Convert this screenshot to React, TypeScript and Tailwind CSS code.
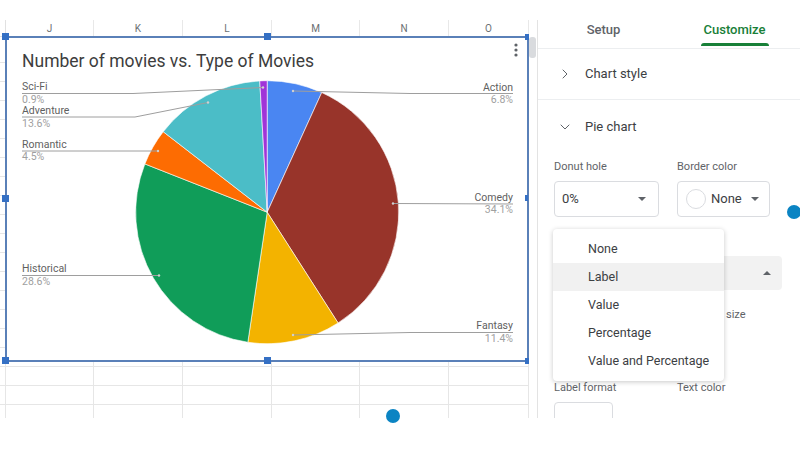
import { ChevronDown, ChevronRight } from 'lucide-react';

const cols = [
  { label: 'J', w: 'w-[88px]' },
  { label: 'K', w: 'w-[89px]' },
  { label: 'L', w: 'w-[89px]' },
  { label: 'M', w: 'w-[88px]' },
  { label: 'N', w: 'w-[89px]' },
  { label: 'O', w: 'w-[80px]' },
];

const slices = [
  { name: 'Action', pct: 6.8, color: '#4a86f2' },
  { name: 'Comedy', pct: 34.1, color: '#98342a' },
  { name: 'Fantasy', pct: 11.4, color: '#f3b300' },
  { name: 'Historical', pct: 28.6, color: '#109d59' },
  { name: 'Romantic', pct: 4.5, color: '#fd6c02' },
  { name: 'Adventure', pct: 13.6, color: '#4bbdc7' },
  { name: 'Sci-Fi', pct: 0.9, color: '#a034d8' },
];

const CX = 267.2;
const CY = 212.2;
const R = 131.5;

function slicePath(from: number, to: number) {
  const a0 = (from / 100) * Math.PI * 2;
  const a1 = (to / 100) * Math.PI * 2;
  const x0 = CX + R * Math.sin(a0);
  const y0 = CY - R * Math.cos(a0);
  const x1 = CX + R * Math.sin(a1);
  const y1 = CY - R * Math.cos(a1);
  const large = to - from > 50 ? 1 : 0;
  return `M${CX} ${CY} L${x0} ${y0} A${R} ${R} 0 ${large} 1 ${x1} ${y1} Z`;
}

const leftLabels = [
  { name: 'Sci-Fi', pct: '0.9%', y: 90, line: '22,93.5 133,93.5 263,87.5', dot: [263, 87.5] },
  { name: 'Adventure', pct: '13.6%', y: 114, line: '22,117 135,117 208,102.5', dot: [208, 102.5] },
  { name: 'Romantic', pct: '4.5%', y: 147.5, line: '22,151 158,151', dot: [158, 151] },
  { name: 'Historical', pct: '28.6%', y: 272, line: '22,275.5 159,275.5', dot: [159, 275.5] },
];

const rightLabels = [
  { name: 'Action', pct: '6.8%', y: 90.5, line: '293,91 410,93.5 513,93.5', dot: [293, 91] },
  { name: 'Comedy', pct: '34.1%', y: 200.5, line: '393,203.5 513,204', dot: [393, 203.5] },
  { name: 'Fantasy', pct: '11.4%', y: 329, line: '293,335 410,332.5 513,332.5', dot: [293, 335] },
];

const menuItems = ['None', 'Label', 'Value', 'Percentage', 'Value and Percentage'];

function Caret({ up = false }: { up?: boolean }) {
  return (
    <svg width="8" height="4" viewBox="0 0 8 4">
      <path d={up ? 'M0 4L4 0L8 4Z' : 'M0 0L8 0L4 4Z'} fill="#5f6368" />
    </svg>
  );
}

function PieChart() {
  let acc = 0;
  const total = slices.reduce((s, x) => s + x.pct, 0);
  return (
    <svg className="absolute inset-0" width={520} height={322} viewBox="7 38 520 322">
      <text x={22} y={67} fontSize={17.5} fill="#3d3d3d" fontFamily="Roboto, sans-serif">
        Number of movies vs. Type of Movies
      </text>
      <circle cx={516} cy={45} r={1.6} fill="#5f6368" />
      <circle cx={516} cy={50} r={1.6} fill="#5f6368" />
      <circle cx={516} cy={55} r={1.6} fill="#5f6368" />

      {slices.map((s) => {
        const from = (acc / total) * 100;
        acc += s.pct;
        const to = (acc / total) * 100;
        return <path key={s.name} d={slicePath(from, to)} fill={s.color} stroke="#ffffff" strokeWidth={0.6} />;
      })}

      {leftLabels.map((l) => (
        <g key={l.name} fontFamily="Roboto, sans-serif" fontSize={10.5}>
          <polyline points={l.line} fill="none" stroke="#9e9e9e" strokeWidth={1} />
          <circle cx={l.dot[0]} cy={l.dot[1]} r={1.2} fill="#d0d0d0" />
          <text x={22} y={l.y} fill="#5f5f5f">{l.name}</text>
          <text x={22} y={l.y + 12.5} fill="#a0a0a0">{l.pct}</text>
        </g>
      ))}
      {rightLabels.map((l) => (
        <g key={l.name} fontFamily="Roboto, sans-serif" fontSize={10.5} textAnchor="end">
          <polyline points={l.line} fill="none" stroke="#9e9e9e" strokeWidth={1} />
          <circle cx={l.dot[0]} cy={l.dot[1]} r={1.2} fill="#d0d0d0" />
          <text x={513} y={l.y} fill="#5f5f5f">{l.name}</text>
          <text x={513} y={l.y + 12.5} fill="#a0a0a0">{l.pct}</text>
        </g>
      ))}
    </svg>
  );
}

function Sheet() {
  const rows = Array.from({ length: 20 }, (_, i) => i);
  const handle = 'absolute h-[7px] w-[7px] bg-[#3570c4]';
  return (
    <div className="relative flex h-full w-[537px]">
      <div className="flex w-[529px] flex-col">
        {/* column headers */}
        <div className="flex h-[17px] shrink-0 border-b border-[#e1e1e1]">
          <div className="w-[6px] border-r border-[#e1e1e1]" />
          {cols.map((c) => (
            <div
              key={c.label}
              className={`${c.w} flex items-center justify-center border-r border-[#e8e8e8] text-[10px] text-[#6b6f73]`}
            >
              {c.label}
            </div>
          ))}
        </div>
        {/* cells */}
        <div className="flex-1 overflow-hidden pt-[7px]">
          {rows.map((r) => (
            <div key={r} className="flex h-[19px] border-b border-[#e6e6e6]">
              <div className="w-[6px] border-r border-[#e6e6e6]" />
              {cols.map((c) => (
                <div key={c.label} className={`${c.w} border-r border-[#e6e6e6]`} />
              ))}
            </div>
          ))}
        </div>
      </div>
      {/* scrollbar */}
      <div className="w-[8px] pt-[17px]">
        <div className="h-[21px] w-[7px] rounded-[3px] bg-[#d9dbde]" />
      </div>

      {/* chart */}
      <div className="absolute left-[5px] top-[16px] h-[326px] w-[524px] border-2 border-[#5a80b8] bg-white">
        <PieChart />
      </div>
      <div className={`${handle} left-[2px] top-[13px]`} />
      <div className={`${handle} left-[264px] top-[13px]`} />
      <div className="absolute left-[525px] top-[14px] h-[6px] w-[4px] bg-[#3570c4]" />
      <div className={`${handle} left-[2px] top-[175px]`} />
      <div className="absolute left-[525px] top-[175px] h-[6px] w-[3px] bg-[#3570c4]" />
      <div className={`${handle} left-[2px] top-[337px]`} />
      <div className={`${handle} left-[264px] top-[337px]`} />
      <div className="absolute left-[525px] top-[338px] h-[6px] w-[4px] bg-[#3570c4]" />
    </div>
  );
}

function Field({ label, children }: { label?: string; children: React.ReactNode }) {
  return (
    <div className="flex w-[105px] flex-col">
      <div className="mb-[7px] h-[14px] whitespace-nowrap text-[11px] leading-[14px] text-[#5f6368]">{label}</div>
      {children}
    </div>
  );
}

function Panel() {
  return (
    <div className="relative flex-1 overflow-hidden border-l border-[#e3e3e3]">
      {/* tabs */}
      <div className="flex h-[29px] border-b border-[#eceef0]">
        <div className="flex flex-1 flex-col items-center pt-[2px]">
          <span className="text-[13px] font-medium leading-[16px] text-[#5f6368]">Setup</span>
        </div>
        <div className="flex flex-1 flex-col items-center pt-[2px]">
          <span className="text-[13px] font-medium leading-[16px] text-[#188038]">Customize</span>
          <div className="mt-[5px] h-[3px] w-[68px] rounded-t-[3px] bg-[#188038]" />
        </div>
      </div>

      {/* chart style */}
      <div className="flex h-[51px] items-center gap-[12px] border-b border-[#eceef0] pl-[19px]">
        <ChevronRight size={16} strokeWidth={1.5} color="#5f6368" />
        <span className="text-[13px] text-[#3c4043]">Chart style</span>
      </div>

      {/* pie chart */}
      <div className="flex h-[54px] items-center gap-[12px] pl-[19px]">
        <ChevronDown size={16} strokeWidth={1.5} color="#5f6368" />
        <span className="text-[13px] text-[#3c4043]">Pie chart</span>
      </div>

      <div className="flex flex-col gap-[18px] px-[16px] pt-[6px]">
        <div className="flex gap-[18px]">
          <Field label="Donut hole">
            <div className="flex h-[36px] w-[105px] items-center justify-between rounded-[4px] border border-[#dadce0] pl-[7px] pr-[12px]">
              <span className="text-[13px] text-[#3c4043]">0%</span>
              <Caret />
            </div>
          </Field>
          <Field label="Border color">
            <div className="flex h-[36px] w-[93px] items-center rounded-[4px] border border-[#dadce0] pl-[8px] pr-[10px]">
              <div className="h-[20px] w-[20px] rounded-full border border-[#dadce0]" />
              <span className="ml-[5px] flex-1 text-[13px] text-[#3c4043]">None</span>
              <Caret />
            </div>
          </Field>
        </div>

        {/* slice label select, open: its menu lies over it */}
        <Field>
          <div className="flex h-[34px] w-[228px] items-center justify-end rounded-[4px] bg-[#f2f2f2] pr-[11px]">
            <Caret up />
          </div>
        </Field>

        <div className="flex gap-[18px]">
          <Field>
            <div className="h-[34px] w-[105px] rounded-[4px] border border-[#dadce0]" />
          </Field>
          <div className="flex w-[105px] flex-col">
            <div className="mb-[7px] h-[14px] pl-[49px] text-[11px] leading-[14px] text-[#5f6368]">size</div>
            <div className="h-[34px]" />
          </div>
        </div>

        <div className="flex gap-[18px]">
          <Field label="Label format">
            <div className="h-[36px] w-[59px] rounded-[4px] border border-[#dadce0]" />
          </Field>
          <Field label="Text color">
            <div className="h-[36px]" />
          </Field>
        </div>
      </div>

      {/* open dropdown menu */}
      <div className="absolute left-[15px] top-[209px] w-[171px] rounded-[4px] bg-white py-[6px] shadow-[0_1px_5px_rgba(0,0,0,0.22)]">
        {menuItems.map((m) => (
          <div
            key={m}
            className={`flex h-[28px] items-center pl-[35px] text-[12.5px] text-[#3c4043] ${m === 'Label' ? 'bg-[#f1f1f1]' : ''}`}
          >
            {m}
          </div>
        ))}
      </div>
    </div>
  );
}

export default function App() {
  return (
    <div className="relative h-[450px] w-[800px] overflow-hidden bg-white font-['Roboto',sans-serif]">
      <div className="mt-[20px] flex h-[398px]">
        <Sheet />
        <Panel />
      </div>
      <div className="absolute left-[386px] top-[409px] h-[14px] w-[14px] rounded-full bg-[#0b84c3]" />
      <div className="absolute left-[787px] top-[205px] h-[14px] w-[14px] rounded-full bg-[#0b84c3]" />
    </div>
  );
}
